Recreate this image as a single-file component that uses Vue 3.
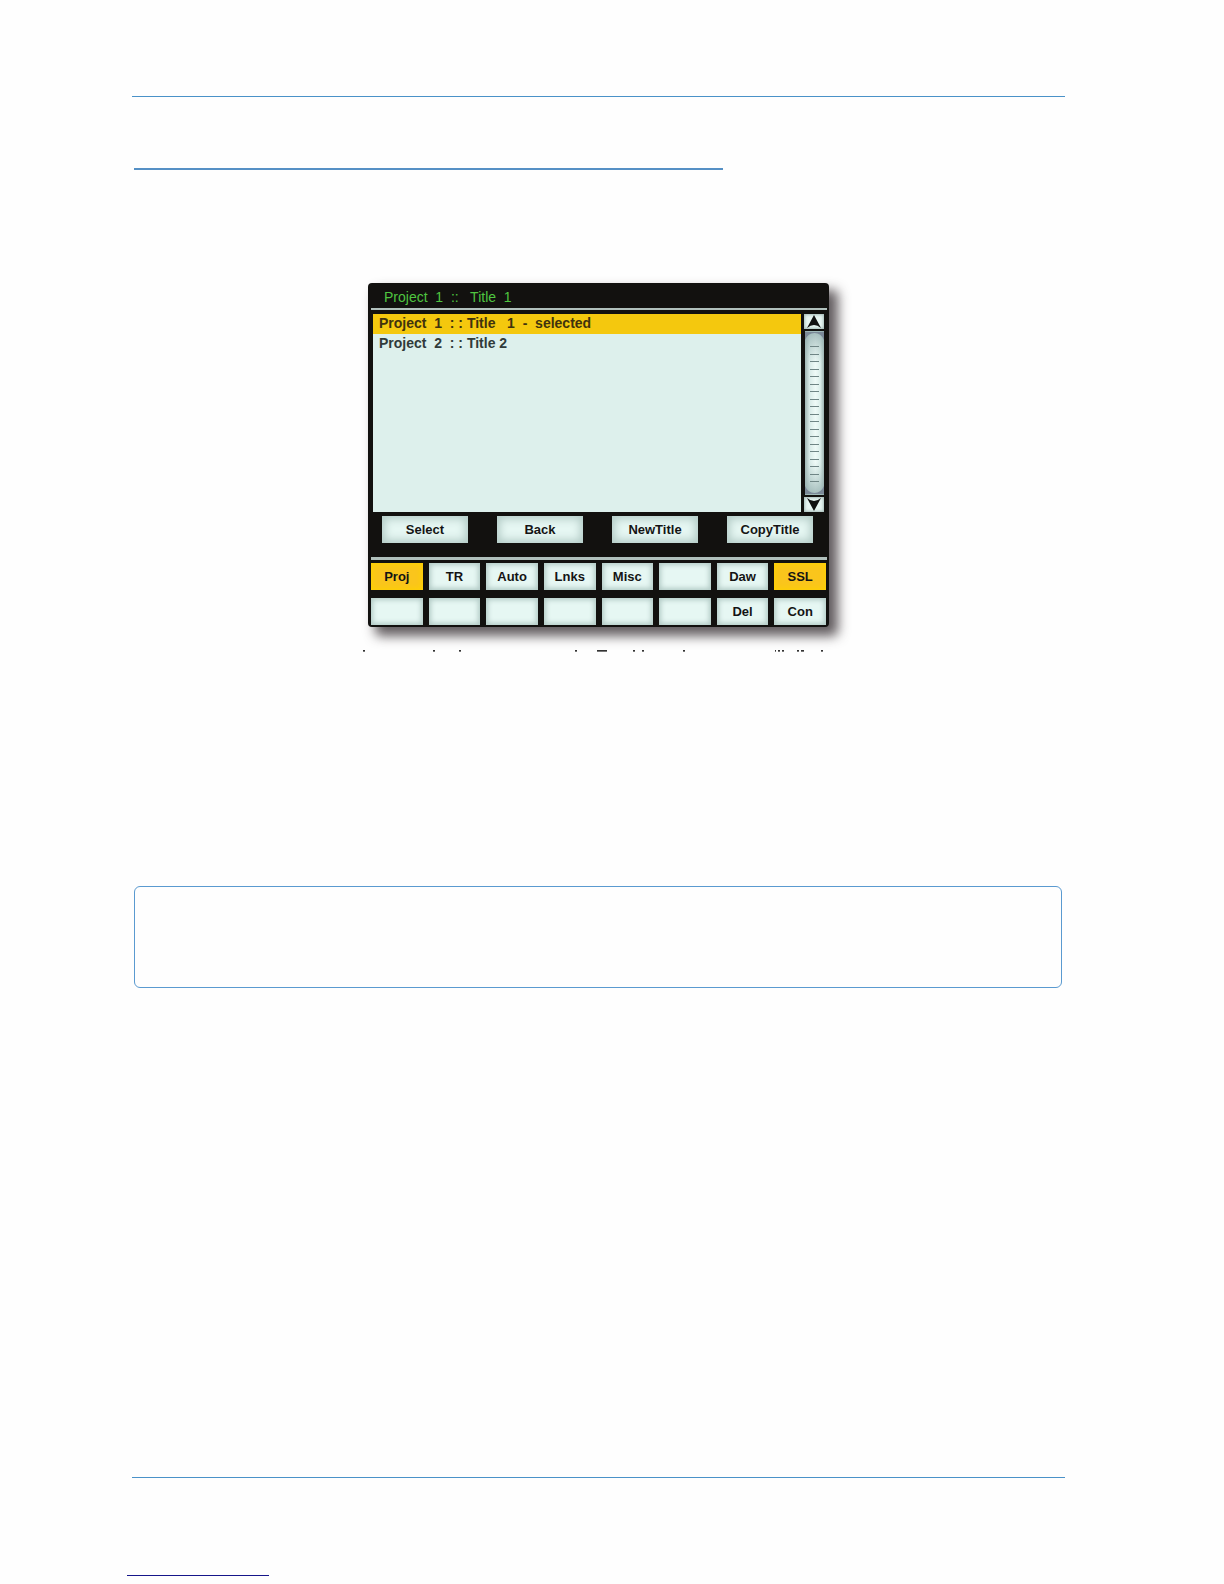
<script setup>
import { ref } from 'vue'

const status = 'Project  1  ::   Title  1'
const titles = [
  'Project  1  : : Title   1  -  selected',
  'Project  2  : : Title 2',
]
const selected = ref(0)

const actions = ['Select', 'Back', 'NewTitle', 'CopyTitle']

const keys = [
  { label: 'Proj', on: true },
  { label: 'TR' },
  { label: 'Auto' },
  { label: 'Lnks' },
  { label: 'Misc' },
  { label: '' },
  { label: 'Daw' },
  { label: 'SSL', on: true },
  { label: '' },
  { label: '' },
  { label: '' },
  { label: '' },
  { label: '' },
  { label: '' },
  { label: 'Del' },
  { label: 'Con' },
]

const ticks = Array.from({ length: 19 }, (_, i) => 15 + Math.round(i * 7.5))

// Slivers of the clipped caption line: [x, width]
const slivers = [
  [6, 2], [76, 2], [102, 2], [218, 2], [240, 10], [276, 2], [285, 2],
  [326, 2], [418, 1], [421, 2], [425, 2], [440, 2], [444, 3], [464, 2],
]
</script>

<template>
  <main class="page">
    <hr class="rule" />
    <hr class="heading-rule" />

    <section class="screen" aria-label="Project selection">
      <header class="status">{{ status }}</header>

      <div class="browser">
        <ul class="list">
          <li v-for="(title, i) in titles" :key="i">
            <button
              type="button"
              class="row"
              :class="{ current: i === selected }"
              @click="selected = i"
            >{{ title }}</button>
          </li>
        </ul>
        <div class="scroll">
          <button type="button" class="arrow" aria-label="Scroll up">
            <svg width="19" height="15" viewBox="0 0 19 15">
              <path d="M10 1 L17 14 Q10 8 3 14 Z" fill="#111" />
            </svg>
          </button>
          <svg class="track" width="19" height="164" viewBox="0 0 19 164" aria-hidden="true">
            <defs>
              <linearGradient id="across" x1="0" x2="1" y1="0" y2="0">
                <stop offset="0" stop-color="#9fb5b3" />
                <stop offset=".25" stop-color="#d9ebe8" />
                <stop offset=".55" stop-color="#eefaf7" />
                <stop offset=".8" stop-color="#dcefeb" />
                <stop offset="1" stop-color="#9db3b1" />
              </linearGradient>
              <linearGradient id="ends" x1="0" x2="0" y1="0" y2="1">
                <stop offset="0" stop-color="#8fabab" stop-opacity=".8" />
                <stop offset=".2" stop-color="#a9c2c0" stop-opacity="0" />
                <stop offset=".8" stop-color="#a9c2c0" stop-opacity="0" />
                <stop offset="1" stop-color="#8fabab" stop-opacity=".8" />
              </linearGradient>
            </defs>
            <rect width="19" height="164" fill="url(#across)" />
            <rect width="19" height="164" fill="url(#ends)" />
            <path
              d="M0 1H19V9Q16 2 9.500 2Q3 2 0 9Z M0 163H19V155Q16 162 9.500 162Q3 162 0 155Z"
              fill="#7b8998"
            />
            <rect v-for="y in ticks" :key="y" x="5" :y="y" width="9" height="1" fill="#6f8585" />
          </svg>
          <button type="button" class="arrow" aria-label="Scroll down">
            <svg width="19" height="15" viewBox="0 0 19 15">
              <path d="M10 14 L17 1 Q10 7 3 1 Z" fill="#111" />
            </svg>
          </button>
        </div>
      </div>

      <div class="actions">
        <button v-for="a in actions" :key="a" type="button" class="key">{{ a }}</button>
      </div>

      <div class="keys">
        <button
          v-for="(k, i) in keys"
          :key="i"
          type="button"
          class="key"
          :class="{ on: k.on }"
          :aria-label="k.label ? null : 'Unassigned'"
        >{{ k.label }}</button>
      </div>
    </section>

    <svg class="caption" width="484" height="2" viewBox="0 0 484 2" aria-hidden="true">
      <rect v-for="s in slivers" :key="s[0]" :x="s[0]" y="0" :width="s[1]" height="1" fill="#333" />
      <rect v-for="s in slivers" :key="'b' + s[0]" :x="s[0]" y="1" :width="s[1]" height="1" fill="#777" />
    </svg>

    <aside class="note"></aside>

    <hr class="rule" />
    <hr class="link-rule" />
  </main>
</template>

<style>
body {
  margin: 0;
  background: #fefefe;
}
</style>

<style scoped>
.page {
  display: flex;
  flex-direction: column;
  padding: 96px 159px 8px 132px;
  font-family: "Liberation Sans", Arial, sans-serif;
}

hr {
  flex: none;
  margin: 0;
  border: 0;
}

.rule {
  height: 1px;
  background: #4a92c8;
}

.heading-rule {
  width: 589px;
  max-width: 100%;
  height: 2px;
  margin: 71px 0 113px 2px;
  background: #5590c5;
}

.screen {
  box-sizing: border-box;
  align-self: center;
  width: 100%;
  max-width: 461px;
  padding: 0 2px 2px 3px;
  border-radius: 4px;
  background: #12110f;
  box-shadow: 8px 8px 12px 1px rgba(45, 38, 42, 0.75);
}

.status {
  height: 25px;
  padding-left: 13px;
  border-bottom: 2px solid #b0c0bc;
  color: #4fc540;
  font-size: 14px;
  line-height: 29px;
  white-space: pre;
}

.browser {
  display: flex;
  gap: 3px;
  padding: 4px 3px 0 2px;
}

.list {
  flex: 1;
  min-height: 198px;
  margin: 0;
  padding: 0;
  background: #ddf0ec;
  list-style: none;
}

.row {
  display: flex;
  width: 100%;
  height: 20px;
  padding: 0 6px;
  border: 0;
  background: transparent;
  color: #303b3a;
  font: bold 14px/18px "Liberation Sans", Arial, sans-serif;
  text-align: left;
  white-space: pre;
}

.row.current {
  background: #f4c80e;
  color: #40330d;
}

.scroll {
  display: flex;
  flex-direction: column;
  justify-content: space-between;
  width: 20px;
}

.arrow {
  height: 15px;
  padding: 0;
  border: 0;
  background: #e8f6f3;
  box-shadow: inset 0 0 3px 1px #a5bbb7;
}

.arrow svg,
.track {
  display: block;
}

.track {
  align-self: flex-end;
}

.actions {
  display: flex;
  justify-content: space-between;
  padding: 4px 14px 14px 11px;
  border-bottom: 3px solid #b0c0bc;
}

.actions .key {
  width: 86px;
  box-shadow: inset 0 0 8px 3px #b3cbc6;
}

.keys {
  display: grid;
  grid-template-columns: repeat(8, 1fr);
  gap: 8px 6px;
  padding: 3px 1px 0 0;
}

.key {
  height: 27px;
  padding: 0;
  border: 0;
  background: #e6f7f3;
  box-shadow: inset 0 0 5px 2px #b3cbc6;
  color: #141414;
  font: bold 13px/27px "Liberation Sans", Arial, sans-serif;
}

.key.on {
  background: #fac51c;
  box-shadow: inset 0 0 5px 2px #fdd005;
}

.caption {
  align-self: center;
  margin-top: 23px;
}

.note {
  height: 100px;
  margin: 234px 3px 489px 2px;
  border: 1px solid #5a9ad0;
  border-radius: 6px;
}

.link-rule {
  width: 142px;
  height: 1px;
  margin: 97px 0 0 -5px;
  background: #16168a;
}
</style>
